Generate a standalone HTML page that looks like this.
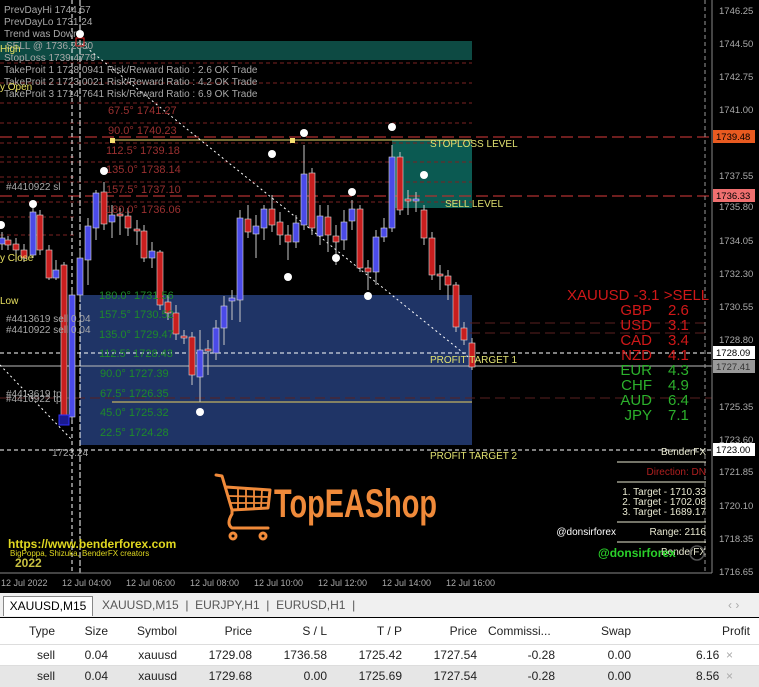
<!DOCTYPE html>
<html><head><meta charset="utf-8"><style>
*{margin:0;padding:0;box-sizing:border-box}
body{width:759px;height:687px;overflow:hidden;background:#000;font-family:"Liberation Sans",sans-serif;position:relative}
svg{position:absolute;left:0;top:0}
.tabs{position:absolute;left:0;top:593px;width:759px;height:24px;background:#f0f0f0;font-size:12px;color:#555}
.tab{position:absolute;top:3px;height:20px;line-height:19px}
.tbl{position:absolute;left:0;top:618px;width:759px;height:69px;background:#fff;font-size:12px;color:#222}
.row{position:absolute;left:0;width:759px;height:21px}
.c{position:absolute;text-align:right;line-height:21px}
</style></head><body>
<svg width="759" height="593" viewBox="0 0 759 593" font-family="Liberation Sans, sans-serif">
<rect width="759" height="593" fill="#000"/>
<!-- boxes -->
<rect x="0" y="41" width="472" height="19" fill="#0d4a43"/>
<rect x="392" y="140" width="80" height="68" fill="#0b5a52"/>
<rect x="80" y="295" width="392" height="150" fill="#1f3466"/>
<!-- gann red dashed -->
<g stroke="#7a2222" stroke-width="1" stroke-dasharray="4,3">
<line x1="0" y1="63" x2="472" y2="63"/><line x1="0" y1="83" x2="472" y2="83"/>
<line x1="0" y1="103" x2="472" y2="103"/><line x1="0" y1="123" x2="472" y2="123"/>
<line x1="0" y1="143" x2="472" y2="143"/><line x1="0" y1="162" x2="472" y2="162"/>
<line x1="0" y1="182" x2="472" y2="182"/><line x1="0" y1="202" x2="472" y2="202"/>
<line x1="0" y1="217" x2="75" y2="217"/><line x1="0" y1="235" x2="75" y2="235"/>
<line x1="0" y1="157" x2="75" y2="157"/><line x1="0" y1="177" x2="75" y2="177"/>
</g>
<g stroke="#b03030" stroke-width="1.3" stroke-dasharray="12,5">
<line x1="0" y1="137" x2="712" y2="137"/><line x1="0" y1="196" x2="712" y2="196"/>
</g>
<g stroke="#5a2020" stroke-dasharray="10,5"><line x1="0" y1="398" x2="712" y2="398"/><line x1="470" y1="323" x2="705" y2="323"/><line x1="470" y1="333" x2="705" y2="333"/></g>
<!-- yellow lines -->
<line x1="112" y1="140" x2="472" y2="140" stroke="#e8d86a" stroke-width="1"/>
<rect x="110" y="138" width="5" height="5" fill="#f5e070"/><rect x="290" y="138" width="5" height="5" fill="#f5e070"/>
<line x1="112" y1="402" x2="472" y2="402" stroke="#e8d060" stroke-width="1"/>
<!-- white levels -->
<line x1="0" y1="353" x2="712" y2="353" stroke="#fff" stroke-dasharray="4,3"/>
<line x1="0" y1="366" x2="712" y2="366" stroke="#bbb"/>
<line x1="0" y1="450" x2="712" y2="450" stroke="#fff" stroke-dasharray="4,3"/>
<line x1="72" y1="0" x2="72" y2="573" stroke="#fff" stroke-dasharray="4,3"/>
<line x1="80" y1="0" x2="80" y2="573" stroke="#fff" stroke-dasharray="6,2"/>
<line x1="705" y1="0" x2="705" y2="573" stroke="#999" stroke-dasharray="4,3"/>
<line x1="82" y1="44" x2="472" y2="360" stroke="#fff" stroke-dasharray="2,3"/>
<line x1="0" y1="365" x2="72" y2="440" stroke="#fff" stroke-dasharray="2,3"/>
<!-- candles -->
<g id="cd" stroke-width="1"></g>
<!-- gann labels -->
<g font-size="11" fill="#9a3030">
<text x="108" y="114">67.5° 1741.27</text><text x="108" y="134">90.0° 1740.23</text>
<text x="106" y="154">112.5° 1739.18</text><text x="106" y="173">135.0° 1738.14</text>
<text x="106" y="193">157.5° 1737.10</text><text x="106" y="213">180.0° 1736.06</text>
</g>
<g font-size="11" fill="#1f8a2a">
<text x="99" y="299">180.0° 1731.56</text><text x="99" y="318">157.5° 1730.52</text>
<text x="99" y="338">135.0° 1729.47</text><text x="99" y="357">112.5° 1728.43</text>
<text x="100" y="377">90.0° 1727.39</text><text x="100" y="397">67.5° 1726.35</text>
<text x="100" y="416">45.0° 1725.32</text><text x="100" y="436">22.5° 1724.28</text>
</g>
<!-- top-left info -->
<g font-size="10" fill="#a8a8a8">
<text x="4" y="13">PrevDayHi 1744.57</text><text x="4" y="25">PrevDayLo 1731.24</text>
<text x="4" y="37">Trend was Down</text><text x="6" y="49">SELL @ 1736.2330</text>
<text x="4" y="61">StopLoss 1739.4779</text>
<text x="4" y="73">TakeProit 1 1728.0941 Risk/Reward Ratio : 2.6 OK Trade</text>
<text x="4" y="85">TakeProit 2 1723.0021 Risk/Reward Ratio : 4.2 OK Trade</text>
<text x="4" y="97">TakeProit 3 1714.7641 Risk/Reward Ratio : 6.9 OK Trade</text>
<text x="6" y="190">#4410922 sl</text><text x="6" y="322">#4413619 sell 0.04</text><text x="6" y="333">#4410922 sell 0.04</text>
<text x="6" y="397">#4413619 tp</text><text x="6" y="402">#4410922 tp</text>
<text x="52" y="456">1723.24</text>
</g>
<g font-size="10" fill="#e8e060"><text x="0" y="52">High</text><text x="0" y="90">y Open</text><text x="0" y="261">y Close</text><text x="0" y="304">Low</text></g>
<rect x="76" y="38" width="8" height="8" fill="none" stroke="#e02020"/>
<rect x="59" y="415" width="10" height="10" fill="#1a1a90" stroke="#3030ff"/>
<g fill="#fff"><circle cx="80" cy="34" r="4"/><circle cx="33" cy="204" r="4"/><circle cx="104" cy="171" r="4"/><circle cx="272" cy="154" r="4"/><circle cx="304" cy="133" r="4"/><circle cx="392" cy="127" r="4"/><circle cx="352" cy="192" r="4"/><circle cx="424" cy="175" r="4"/><circle cx="288" cy="277" r="4"/><circle cx="336" cy="258" r="4"/><circle cx="368" cy="296" r="4"/><circle cx="200" cy="412" r="4"/><circle cx="1" cy="225" r="4"/></g>
<g font-size="10" fill="#e0e070"><text x="430" y="147">STOPLOSS LEVEL</text><text x="445" y="207">SELL LEVEL</text><text x="430" y="363">PROFIT TARGET 1</text><text x="430" y="459">PROFIT TARGET 2</text></g>
<!-- currency panel -->
<g font-size="15">
<text x="567" y="300" fill="#d01818">XAUUSD -3.1  &gt;SELL</text>
<g text-anchor="end" fill="#d01818"><text x="652" y="315">GBP</text><text x="652" y="330">USD</text><text x="652" y="345">CAD</text><text x="652" y="360">NZD</text></g>
<g fill="#d01818"><text x="668" y="315">2.6</text><text x="668" y="330">3.1</text><text x="668" y="345">3.4</text><text x="668" y="360">4.1</text></g>
<g text-anchor="end" fill="#2cb02c"><text x="652" y="375">EUR</text><text x="652" y="390">CHF</text><text x="652" y="405">AUD</text><text x="652" y="420">JPY</text></g>
<g fill="#2cb02c"><text x="668" y="375">4.3</text><text x="668" y="390">4.9</text><text x="668" y="405">6.4</text><text x="668" y="420">7.1</text></g>
</g>
<!-- BenderFX panel -->
<g font-size="10" text-anchor="end">
<text x="706" y="455" fill="#e8e8d0">BenderFX</text>
<line x1="617" y1="462" x2="706" y2="462" stroke="#e8e8d0"/>
<text x="706" y="475" fill="#b02020">Direction: DN</text>
<line x1="617" y1="482" x2="706" y2="482" stroke="#e8e8d0"/>
<text x="706" y="495" fill="#e8e8d0">1. Target - 1710.33</text><text x="706" y="505" fill="#e8e8d0">2. Target - 1702.08</text><text x="706" y="515" fill="#e8e8d0">3. Target - 1689.17</text>
<line x1="617" y1="522" x2="706" y2="522" stroke="#e8e8d0"/>
<text x="706" y="535" fill="#e8e8d0">Range: 2116</text>
<text x="616" y="535" fill="#fff">@donsirforex</text>
<line x1="617" y1="542" x2="706" y2="542" stroke="#e8e8d0"/>
<text x="706" y="555" fill="#e8e8d0">BenderFX</text>
</g>
<text x="598" y="557" font-size="12" font-weight="bold" fill="#2ad02a">@donsirforex</text>
<circle cx="697" cy="553" r="7" fill="none" stroke="#555" stroke-width="1.5"/>
<!-- watermark -->
<text x="8" y="548" font-size="12" font-weight="bold" fill="#e0d820">https://www.benderforex.com</text>
<text x="10" y="556" font-size="8" fill="#e0d820">BigPoppa, Shizuka, BenderFX creators</text>
<text x="15" y="567" font-size="12" font-weight="bold" fill="#c8c040">2022</text>
<!-- logo -->
<g fill="none" stroke="#f08a3a" stroke-width="3" stroke-linejoin="round" stroke-linecap="round">
<path d="M216 475 L222 476 L232 510 L232 514 Q226 524 232 528 L268 528"/>
<path d="M226 487 L270 490 L268 508 L232 510"/>
<path d="M238 488 L238 509 M246 489 L246 509 M254 489 L254 509 M262 490 L261 509 M229 496 L269 497 M231 503 L268 503" stroke-width="1.8"/>
<circle cx="233" cy="536" r="3"/><circle cx="263" cy="536" r="3"/>
</g>
<text x="274" y="517" font-size="40" font-weight="bold" fill="#f08a3a" textLength="163" lengthAdjust="spacingAndGlyphs">TopEAShop</text>
<!-- axes -->
<line x1="712" y1="0" x2="712" y2="573" stroke="#888"/>
<line x1="0" y1="573" x2="712" y2="573" stroke="#888"/>
<g font-size="9.5" fill="#aaa" id="ax">
<text x="719" y="14">1746.25</text><text x="719" y="47">1744.50</text><text x="719" y="80">1742.75</text><text x="719" y="113">1741.00</text><text x="719" y="179">1737.55</text><text x="719" y="210">1735.80</text><text x="719" y="244">1734.05</text><text x="719" y="277">1732.30</text><text x="719" y="310">1730.55</text><text x="719" y="343">1728.80</text><text x="719" y="410">1725.35</text><text x="719" y="443">1723.60</text><text x="719" y="475">1721.85</text><text x="719" y="509">1720.10</text><text x="719" y="542">1718.35</text><text x="719" y="575">1716.65</text>
</g>
<rect x="713" y="130" width="42" height="13" fill="#e85a20"/><text x="716" y="140" font-size="9.5" fill="#000">1739.48</text>
<rect x="713" y="189" width="42" height="13" fill="#f07070"/><text x="716" y="199" font-size="9.5" fill="#000">1736.33</text>
<rect x="713" y="346" width="42" height="13" fill="#fff"/><text x="716" y="356" font-size="9.5" fill="#000">1728.09</text>
<rect x="713" y="360" width="42" height="13" fill="#999"/><text x="716" y="370" font-size="9.5" fill="#333">1727.41</text>
<rect x="713" y="443" width="42" height="13" fill="#fff"/><text x="716" y="453" font-size="9.5" fill="#000">1723.00</text>
<g font-size="9" fill="#aaa"><text x="1" y="586">12 Jul 2022</text><text x="62" y="586">12 Jul 04:00</text><text x="126" y="586">12 Jul 06:00</text><text x="190" y="586">12 Jul 08:00</text><text x="254" y="586">12 Jul 10:00</text><text x="318" y="586">12 Jul 12:00</text><text x="382" y="586">12 Jul 14:00</text><text x="446" y="586">12 Jul 16:00</text></g>
</svg>
<div class="tabs">
<div class="tab" style="left:3px;width:90px;background:#fff;border:1px solid #888;border-bottom:none;color:#000;text-align:center">XAUUSD,M15</div>
<div class="tab" style="left:102px">XAUUSD,M15 &nbsp;| &nbsp;EURJPY,H1 &nbsp;| &nbsp;EURUSD,H1 &nbsp;|</div>
<div class="tab" style="left:728px;color:#aaa">‹ ›</div>
</div>
<div class="tbl">
<div class="row" style="top:3px;height:24px;border-bottom:1px solid #ddd">
<div class="c" style="right:704px">Type</div><div class="c" style="right:651px">Size</div><div class="c" style="right:582px">Symbol</div><div class="c" style="right:507px">Price</div><div class="c" style="right:432px">S / L</div><div class="c" style="right:357px">T / P</div><div class="c" style="right:282px">Price</div><div class="c" style="left:488px">Commissi...</div><div class="c" style="right:128px">Swap</div><div class="c" style="right:9px">Profit</div></div>
<div class="row" style="top:27px;border-bottom:1px solid #ddd">
<div class="c" style="right:704px">sell</div><div class="c" style="right:651px">0.04</div><div class="c" style="right:582px">xauusd</div><div class="c" style="right:507px">1729.08</div><div class="c" style="right:432px">1736.58</div><div class="c" style="right:357px">1725.42</div><div class="c" style="right:282px">1727.54</div><div class="c" style="right:204px">-0.28</div><div class="c" style="right:128px">0.00</div><div class="c" style="right:26px">6.16 <span style="color:#aaa">&nbsp;×</span></div></div>
<div class="row" style="top:48px;background:#e6e6e6">
<div class="c" style="right:704px">sell</div><div class="c" style="right:651px">0.04</div><div class="c" style="right:582px">xauusd</div><div class="c" style="right:507px">1729.68</div><div class="c" style="right:432px">0.00</div><div class="c" style="right:357px">1725.69</div><div class="c" style="right:282px">1727.54</div><div class="c" style="right:204px">-0.28</div><div class="c" style="right:128px">0.00</div><div class="c" style="right:26px">8.56 <span style="color:#aaa">&nbsp;×</span></div></div>
</div>
<script>
var C=[[2,238,244,232,250,'b'],[8,240,245,236,250,'r'],[16,244,250,238,262,'r'],[24,250,258,244,262,'r'],[33,212,255,205,258,'b'],[40,215,250,210,255,'r'],[49,250,278,245,280,'r'],[56,270,278,260,280,'b'],[64,265,420,262,425,'r'],[72,295,417,290,420,'b'],[80,258,295,250,300,'b'],[88,226,260,218,285,'b'],[96,193,228,190,240,'b'],[104,192,224,182,230,'r'],[112,215,222,205,238,'b'],[120,214,216,208,235,'r'],[128,216,228,208,236,'r'],[137,229,231,220,245,'r'],[144,231,258,225,262,'r'],[152,251,258,242,268,'b'],[160,252,305,250,310,'r'],[168,302,313,295,320,'r'],[176,313,334,305,340,'r'],[184,336,338,330,344,'r'],[192,337,375,332,385,'r'],[200,350,377,330,402,'b'],[208,349,351,340,375,'r'],[216,328,353,320,360,'b'],[224,306,328,296,345,'b'],[232,298,301,290,320,'b'],[240,218,300,210,322,'b'],[248,219,232,205,238,'r'],[256,226,234,215,258,'b'],[264,209,228,205,240,'b'],[272,209,225,195,232,'r'],[280,222,235,212,245,'r'],[288,235,242,225,260,'r'],[296,223,242,215,248,'b'],[304,174,225,145,230,'b'],[312,173,228,168,235,'r'],[320,216,236,205,245,'b'],[328,217,235,205,252,'r'],[336,236,242,225,265,'r'],[344,222,240,210,250,'b'],[352,209,221,200,230,'b'],[360,209,268,205,272,'r'],[368,268,272,260,290,'r'],[376,237,272,230,285,'b'],[384,228,237,218,242,'b'],[392,157,228,145,232,'b'],[400,157,210,152,215,'r'],[408,199,201,190,215,'r'],[416,199,201,192,212,'b'],[424,210,238,205,245,'r'],[432,238,275,232,280,'r'],[440,274,276,265,290,'r'],[448,276,285,270,300,'r'],[456,285,327,282,332,'r'],[464,328,340,322,345,'r'],[472,343,367,338,370,'r']];
var s='';C.forEach(function(c){var col=c[5]=='r'?'#c81e1e':'#4a4ae8';s+='<line x1="'+c[0]+'" y1="'+c[3]+'" x2="'+c[0]+'" y2="'+c[4]+'" stroke="#c8c8c8"/><rect x="'+(c[0]-3)+'" y="'+c[1]+'" width="6" height="'+Math.max(1,c[2]-c[1])+'" fill="'+col+'" stroke="#ddd" stroke-width="0.6"/>';});
document.getElementById('cd').innerHTML=s;
</script>
</body></html>
